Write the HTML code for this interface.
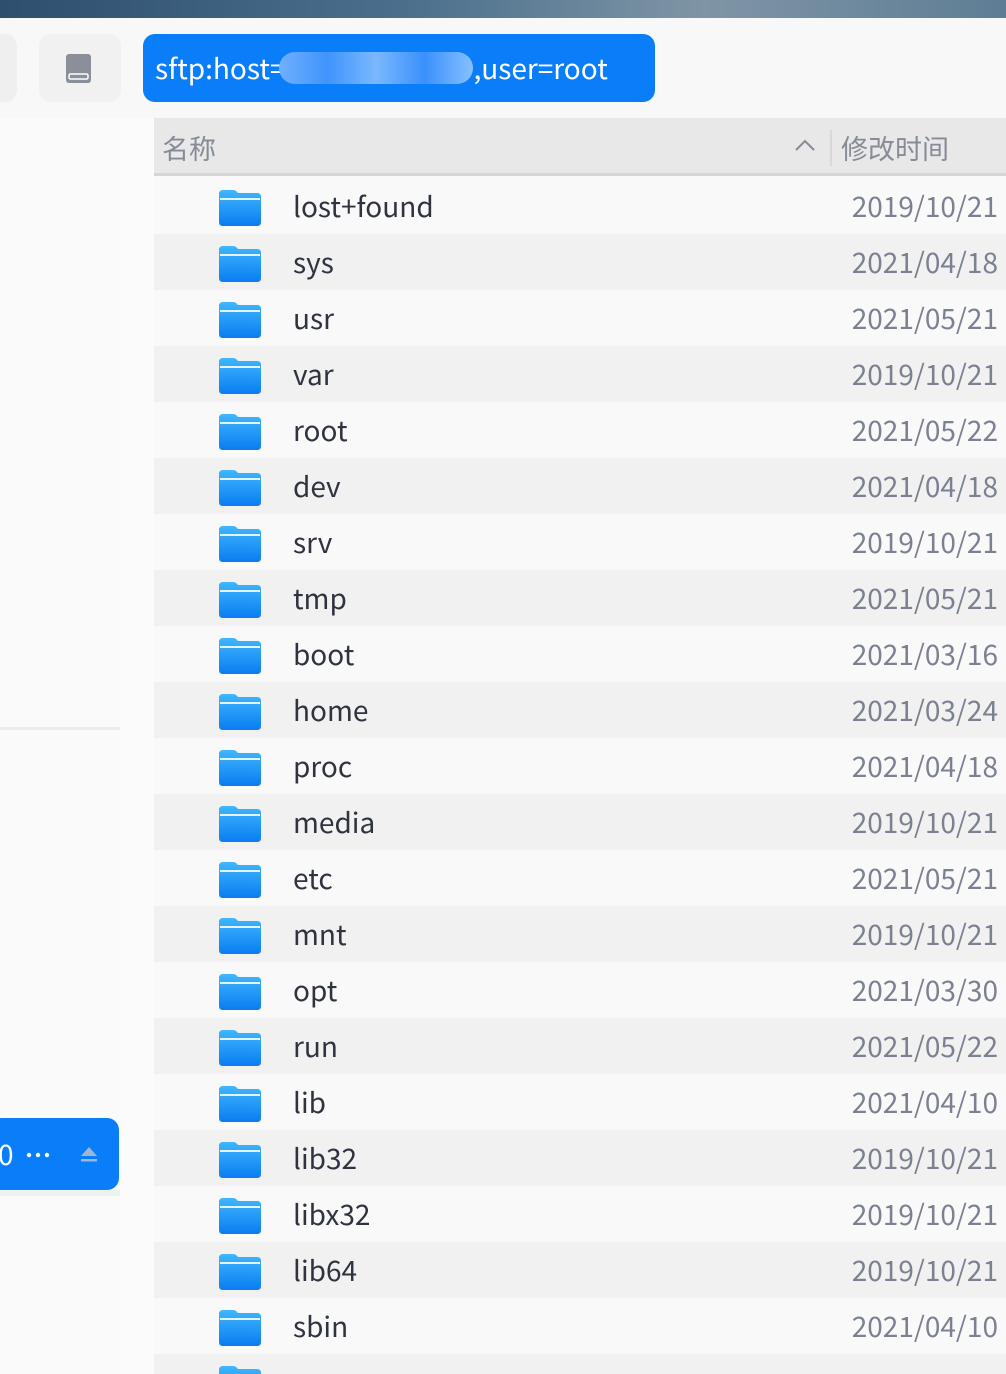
<!DOCTYPE html>
<html><head><meta charset="utf-8"><style>
*{margin:0;padding:0;box-sizing:border-box}
html,body{width:1006px;height:1374px;overflow:hidden}
body{background:#fbfbfb;font-family:"Noto Sans CJK SC","Liberation Sans",sans-serif;position:relative}
.top{position:absolute;left:0;top:0;width:1006px;height:18px;background:linear-gradient(90deg,#2e4f6e,#4a6f8c 40%,#7f95a6 70%,#5e7d94)}
.bar{position:absolute;left:0;top:18px;width:1006px;height:100px;background:#f8f8f8}
.b1{position:absolute;left:-20px;top:34px;width:37px;height:68px;background:#efefef;border-radius:12px}
.b2{position:absolute;left:39px;top:34px;width:82px;height:68px;background:#f1f1f1;border-radius:12px}
.addr{position:absolute;left:143px;top:34px;width:512px;height:68px;background:#0a7df8;border-radius:12px;color:#fff;font-size:28px;line-height:68px;padding-left:12px;white-space:nowrap}
.blur{position:absolute;left:136px;top:18px;width:194px;height:32px;border-radius:16px;background:linear-gradient(90deg,#6fb0ff,#3f94fc,#7ab8ff,#3a90fb,#86c0ff)}
.side{position:absolute;left:0;top:118px;width:120px;height:1256px;background:#fafafa}
.sep{position:absolute;left:0;top:727px;width:120px;height:3px;background:#ececec}
.dev{position:absolute;left:-10px;top:1118px;width:129px;height:72px;background:#0a7df8;border-radius:12px;color:#fff;font-size:28px;line-height:72px;padding-left:8px}
.list{position:absolute;left:154px;top:118px;width:852px;height:1256px;background:#f9f9f9;overflow:hidden}
.hdr{position:absolute;left:0;top:0;width:852px;height:58px;background:#e8e8e8;border-bottom:3px solid #d6d6d6;color:#868b96;font-size:27px}
.row{position:absolute;left:0;width:852px;height:56px}
.row.g{background:#f1f1f1}
.row .n{position:absolute;left:139px;top:0;line-height:56px;font-size:28px;color:#2f3340}
.row .d{position:absolute;right:8px;top:0;line-height:56px;font-size:28px;color:#7b8190}
.row svg{position:absolute;left:64px;top:10px}
</style></head><body>
<div class="top"></div>
<div class="bar"></div>
<div class="b1"></div>
<div class="b2"><svg width="82" height="68"><rect x="27" y="20" width="25" height="29" rx="3" fill="#8a8f99"/><rect x="30" y="40" width="19" height="5" rx="1.5" fill="none" stroke="#fff" stroke-width="1.5"/></svg></div>
<div class="addr">sftp:host=<span style="display:inline-block;width:188px"></span>,user=root<div class="blur"></div></div>
<div class="side"></div>
<div class="sep"></div>
<div class="dev"><span style="position:absolute;left:8px;top:0">0</span><svg style="position:absolute;left:36px;top:34px" width="24" height="6"><circle cx="3" cy="3" r="2.2" fill="#fff"/><circle cx="12" cy="3" r="2.2" fill="#fff"/><circle cx="21" cy="3" r="2.2" fill="#fff"/></svg><svg style="position:absolute;left:89px;top:26px" width="20" height="20"><path d="M2 12 L10 3 L18 12Z" fill="#9fb6d4"/><rect x="2" y="15" width="16" height="2.5" fill="#9fb6d4"/></svg></div>
<div style="position:absolute;left:0;top:1190px;width:120px;height:6px;background:#eef2ee"></div>
<div class="list">
<div class="hdr"><span style="position:absolute;left:8px;top:10px">名称</span>
<svg style="position:absolute;left:640px;top:20px" width="22" height="14"><path d="M2 12 L11 3 L20 12" fill="none" stroke="#868b96" stroke-width="2"/></svg>
<div style="position:absolute;left:676px;top:12px;width:2px;height:36px;background:#d8d8d8"></div>
<span style="position:absolute;left:687px;top:10px">修改时间</span></div>
<div id="rows"></div>
</div>
<script>
var d=[["lost+found","2019/10/21"],["sys","2021/04/18"],["usr","2021/05/21"],["var","2019/10/21"],["root","2021/05/22"],["dev","2021/04/18"],["srv","2019/10/21"],["tmp","2021/05/21"],["boot","2021/03/16"],["home","2021/03/24"],["proc","2021/04/18"],["media","2019/10/21"],["etc","2021/05/21"],["mnt","2019/10/21"],["opt","2021/03/30"],["run","2021/05/22"],["lib","2021/04/10"],["lib32","2019/10/21"],["libx32","2019/10/21"],["lib64","2019/10/21"],["sbin","2021/04/10"],["",""]];
var ic='<svg width="44" height="40"><defs><linearGradient id="f" x1="0" y1="0" x2="0" y2="1"><stop offset="0" stop-color="#3fb6ff"/><stop offset="1" stop-color="#0a7df0"/></linearGradient></defs><path d="M1 6 Q1 2 5 2 H15 Q18 2 20 5 H39 Q43 5 43 9 V34 Q43 38 39 38 H5 Q1 38 1 34Z" fill="url(#f)"/><path d="M2 11 H42" stroke="#e6f4ff" stroke-width="2"/></svg>';
var h='';for(var i=0;i<d.length;i++){h+='<div class="row'+(i%2?' g':'')+'" style="top:'+(60+56*i)+'px">'+ic+'<span class="n">'+d[i][0]+'</span><span class="d">'+d[i][1]+'</span></div>';}
document.getElementById('rows').innerHTML=h;
</script>
</body></html>
